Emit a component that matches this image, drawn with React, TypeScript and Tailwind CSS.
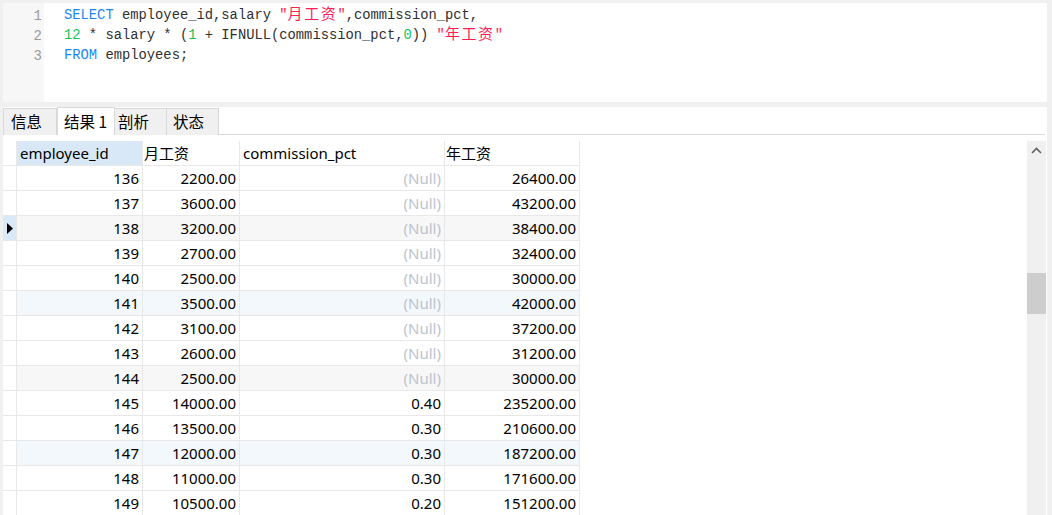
import React from "react";

const rows: [string, string, string | null, string][] = [
  ["136", "2200.00", null, "26400.00"],
  ["137", "3600.00", null, "43200.00"],
  ["138", "3200.00", null, "38400.00"],
  ["139", "2700.00", null, "32400.00"],
  ["140", "2500.00", null, "30000.00"],
  ["141", "3500.00", null, "42000.00"],
  ["142", "3100.00", null, "37200.00"],
  ["143", "2600.00", null, "31200.00"],
  ["144", "2500.00", null, "30000.00"],
  ["145", "14000.00", "0.40", "235200.00"],
  ["146", "13500.00", "0.30", "210600.00"],
  ["147", "12000.00", "0.30", "187200.00"],
  ["148", "11000.00", "0.30", "171600.00"],
  ["149", "10500.00", "0.20", "151200.00"],
];

const cjk = "text-[15px] leading-[0] tracking-[1.6px] [font-family:'Noto_Sans_CJK_SC',sans-serif]";

function Cjk({ children }: { children: React.ReactNode }) {
  return <span className={cjk}>{children}</span>;
}

export default function App() {
  const cell = "h-[25px] border-b border-r border-[#e8e8e8] flex items-center";
  const line = "h-[20px] leading-[20px]";
  return (
    <div className="w-[1052px] h-[515px] bg-[#f0f0f0] overflow-hidden pt-[3px] pl-[3px] pr-[5px]">
      {/* Editor */}
      <div className="h-[99px] bg-white flex">
        <div className="w-[41px] bg-[#f7f7f7] flex flex-col items-end pr-[2px] pt-[3px] text-[#9a9a9a] [font-family:'Liberation_Mono',monospace] text-[14px] leading-[20px]">
          <div className={line}>1</div>
          <div className={line}>2</div>
          <div className={line}>3</div>
        </div>
        <div className="pl-[20px] pt-[3px] text-[#303030] [font-family:'Liberation_Mono',monospace] text-[13.8px] whitespace-pre">
          <div className={line}>
            <span className="text-[#1a86f0]">SELECT</span> employee_id,salary{" "}
            <span className="text-[#ff1f55]">
              "<Cjk>月工资</Cjk>"
            </span>
            ,commission_pct,
          </div>
          <div className={line}>
            <span className="text-[#16c25c]">12</span> * salary * (
            <span className="text-[#16c25c]">1</span> + IFNULL(commission_pct,
            <span className="text-[#16c25c]">0</span>)){" "}
            <span className="text-[#ff1f55]">
              "<Cjk>年工资</Cjk>"
            </span>
          </div>
          <div className={line}>
            <span className="text-[#1a86f0]">FROM</span> employees;
          </div>
        </div>
      </div>

      {/* Results panel */}
      <div className="mt-[5px] h-[408px] bg-white flex flex-col [font-family:'Noto_Sans','Noto_Sans_CJK_SC',sans-serif] text-[15px] text-black">
        {/* Tabs */}
        <div className="h-[28px] flex items-end border-b border-[#dadada] mr-[2px]">
          <div className="h-[27px] w-[54px] bg-[#f0f0f0] border border-b-0 border-[#d9d9d9] flex items-center pl-[7px] -mb-px">
            <span className="[font-family:'Noto_Sans_CJK_SC',sans-serif] text-[15.5px]">信息</span>
          </div>
          <div className="h-[28px] w-[58px] bg-white border border-b-0 border-[#d9d9d9] flex items-center pl-[6px] -mb-px">
            <span className="[font-family:'Noto_Sans_CJK_SC',sans-serif] text-[15.5px]">结果 1</span>
          </div>
          <div className="h-[27px] w-[52px] bg-[#f0f0f0] border border-b-0 border-l-0 border-[#d9d9d9] flex items-center pl-[3px] -mb-px">
            <span className="[font-family:'Noto_Sans_CJK_SC',sans-serif] text-[15.5px]">剖析</span>
          </div>
          <div className="h-[27px] w-[52px] bg-[#f0f0f0] border border-b-0 border-l-0 border-[#d9d9d9] flex items-center pl-[6px] -mb-px">
            <span className="[font-family:'Noto_Sans_CJK_SC',sans-serif] text-[15.5px]">状态</span>
          </div>
        </div>

        {/* Grid + scrollbar */}
        <div className="flex flex-1 pt-[6px]">
          <div className="flex-1">
            <div className="grid grid-cols-[14px_126px_97px_205px_135px]">
              {/* header */}
              <div className={cell}></div>
              <div className={`${cell} bg-[#d9e8f7] pl-[3px]`}>employee_id</div>
              <div className={`${cell} pl-[1px]`}>
                <span className="[font-family:'Noto_Sans_CJK_SC',sans-serif]">月工资</span>
              </div>
              <div className={`${cell} pl-[3px]`}>commission_pct</div>
              <div className={`${cell} pl-[1px]`}>
                <span className="[font-family:'Noto_Sans_CJK_SC',sans-serif]">年工资</span>
              </div>
              {rows.map((r, i) => {
                const bg =
                  i === 2 || i === 8
                    ? "bg-[#f7f7f7]"
                    : i === 5 || i === 11
                    ? "bg-[#f3f8fd]"
                    : "bg-white";
                const c = `${cell} ${bg} justify-end pr-[3px]`;
                return (
                  <React.Fragment key={r[0]}>
                    <div className={`${cell} ${i === 2 ? "bg-[#d9e9f8]" : "bg-white"} justify-center`}>
                      {i === 2 && (
                        <svg width="6" height="11" viewBox="0 0 6 11">
                          <path d="M0 0 L6 5.5 L0 11 Z" fill="#000" />
                        </svg>
                      )}
                    </div>
                    <div className={c}>{r[0]}</div>
                    <div className={c}>{r[1]}</div>
                    <div className={c}>
                      {r[2] === null ? <span className="text-[#bcc3ce]">(Null)</span> : r[2]}
                    </div>
                    <div className={c}>{r[3]}</div>
                  </React.Fragment>
                );
              })}
            </div>
          </div>
          {/* scrollbar */}
          <div className="w-[19px] mr-[1px] bg-[#f0f0f0] flex flex-col items-center">
            <div className="h-[19px] flex items-center justify-center">
              <svg width="11" height="7" viewBox="0 0 11 7">
                <path d="M1 6 L5.5 1.5 L10 6" stroke="#606060" strokeWidth="1.6" fill="none" />
              </svg>
            </div>
            <div className="mt-[113px] w-full h-[41px] bg-[#cdcdcd]"></div>
          </div>
        </div>
      </div>
    </div>
  );
}
